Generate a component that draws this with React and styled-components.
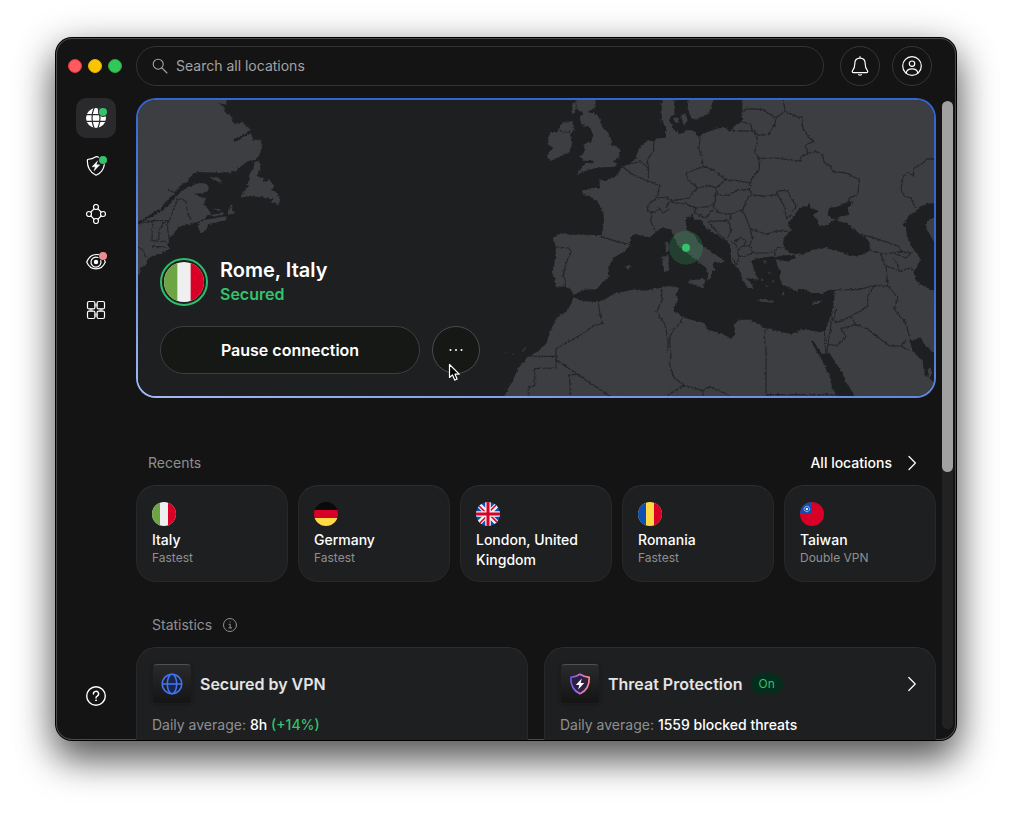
import React from "react";
import styled, { createGlobalStyle } from "styled-components";

const GlobalStyle = createGlobalStyle`
  * { box-sizing: border-box; }
  body { margin: 0; background: #fff; font-family: Inter, "Liberation Sans", sans-serif; color: #fff; }
  button, input { font: inherit; color: inherit; }
  button { padding: 0; cursor: pointer; }
  svg { display: block; }
  h1, h2, h3, p { margin: 0; }
`;

const Page = styled.div`
  display: flex;
  height: 100vh;
  padding: 38px 56px 74px;
  overflow: hidden;
`;

const Window = styled.div`
  flex: 1;
  min-width: 0;
  display: flex;
  flex-direction: column;
  overflow: hidden;
  border-radius: 16px;
  background: #141414;
  box-shadow: inset 0 0 0 1px #4b4b4b, 0 0 0 1px #000, 0 20px 36px rgba(0, 0, 0, 0.5), 0 10px 40px rgba(0, 0, 0, 0.36);
`;

const TopBar = styled.header`
  display: flex;
  align-items: center;
  padding: 8px 24px 12px 12px;
`;

const Lights = styled.div`
  display: flex;
  gap: 6px;
  width: 68px;
`;

const Light = styled.button`
  width: 14px;
  height: 14px;
  border: 1px solid ${(p) => p.$edge};
  border-radius: 50%;
  background: ${(p) => p.$color};
`;

const SearchBox = styled.label`
  flex: 1;
  display: flex;
  align-items: center;
  gap: 8px;
  height: 40px;
  margin-right: 16px;
  padding: 0 15px;
  border: 1px solid #333334;
  border-radius: 20px;
  color: #a3a3a3;
`;

const SearchInput = styled.input`
  flex: 1;
  min-width: 0;
  padding: 0;
  border: 0;
  outline: 0;
  background: none;
  font-size: 14px;
  line-height: 20px;
  &::placeholder { color: #a3a3a3; opacity: 1; }
`;

const RoundButton = styled.button`
  display: grid;
  place-items: center;
  width: 40px;
  height: 40px;
  border: 1px solid #363637;
  border-radius: 50%;
  background: none;
  & + & { margin-left: 12px; }
`;

const Body = styled.div`
  flex: 1;
  min-height: 0;
  display: flex;
`;

const Sidebar = styled.nav`
  display: flex;
  flex-direction: column;
  gap: 8px;
  width: 80px;
  padding: 0 20px 24px;
`;

const NavButton = styled.button`
  position: relative;
  display: grid;
  place-items: center;
  width: 40px;
  height: 40px;
  border: 0;
  border-radius: 10px;
  background: ${(p) => (p.$active ? "#2a2a2c" : "none")};
`;

const NavFoot = styled.div`
  margin-top: auto;
`;

const Dot = styled.span`
  position: absolute;
  top: 10px;
  right: 9px;
  width: 8px;
  height: 8px;
  border-radius: 50%;
  background: ${(p) => p.$color};
`;

const Main = styled.main`
  flex: 1;
  min-width: 0;
  overflow: hidden;
`;

const ScrollTrack = styled.div`
  width: 11px;
  margin: 3px 3px 11px 6px;
  border-radius: 6px;
  background: #222223;
`;

const ScrollThumb = styled.div`
  height: 59%;
  border-radius: 6px;
  background: #a1a1a1;
`;

const Hero = styled.section`
  position: relative;
  display: flex;
  flex-direction: column;
  justify-content: flex-end;
  gap: 20px;
  height: 300px;
  padding: 22px;
  overflow: hidden;
  border: 2px solid transparent;
  border-radius: 20px;
  background: linear-gradient(#1e1f21, #1e1f21) padding-box,
    linear-gradient(12deg, #a4bbf2 0%, #7f9fe6 18%, #3466d2 62%) border-box;
`;

const MapArt = styled.svg`
  position: absolute;
  inset: 0;
  width: 100%;
  height: 100%;
`;

const Place = styled.div`
  position: relative;
  display: flex;
  align-items: center;
  gap: 12px;
`;

const FlagRing = styled.div`
  padding: 2px;
  border: 2px solid #2ebd68;
  border-radius: 50%;
  background: #1e1f21;
`;

const PlaceName = styled.h1`
  font-size: 20px;
  line-height: 24px;
  font-weight: 600;
`;

const PlaceState = styled.p`
  font-size: 16px;
  line-height: 24px;
  font-weight: 600;
  color: #35c26d;
`;

const Actions = styled.div`
  position: relative;
  display: flex;
  gap: 12px;
`;

const PauseButton = styled.button`
  width: 260px;
  height: 48px;
  border: 1px solid #3d3e40;
  border-radius: 24px;
  background: #161816;
  font-size: 16px;
  font-weight: 600;
`;

const MoreButton = styled.button`
  position: relative;
  display: grid;
  place-items: center;
  width: 48px;
  height: 48px;
  border: 1px solid #4a4a4c;
  border-radius: 50%;
  background: #161816;
`;

const Cursor = styled.svg`
  position: absolute;
  left: 15px;
  top: 36px;
`;

const SectionHead = styled.div`
  display: flex;
  align-items: center;
  justify-content: space-between;
  height: 22px;
  margin-top: ${(p) => p.$space};
  margin-bottom: 11px;
  padding: 0 ${(p) => p.$inset} 0;
`;

const SectionTitle = styled.h2`
  display: flex;
  align-items: center;
  gap: 10px;
  font-size: 14px;
  line-height: 20px;
  font-weight: 400;
  color: #8f8f90;
`;

const AllLink = styled.a`
  display: flex;
  align-items: center;
  gap: 12px;
  font-size: 14px;
  line-height: 20px;
  font-weight: 500;
  color: #fff;
  text-decoration: none;
`;

const RecentGrid = styled.div`
  display: grid;
  grid-template-columns: repeat(5, minmax(0, 1fr));
  gap: 10px;
`;

const RecentCard = styled.button`
  display: flex;
  flex-direction: column;
  align-items: flex-start;
  min-height: 97px;
  padding: 16px 15px 8px;
  border: 1px solid #27282a;
  border-top-color: #2d2e30;
  border-radius: 20px;
  background: #1e1f21;
  text-align: left;
`;

const RecentName = styled.span`
  margin-top: 4px;
  font-size: 14px;
  line-height: 20px;
  font-weight: 500;
`;

const RecentNote = styled.span`
  font-size: 12px;
  line-height: 16px;
  color: #8f8f90;
`;

const StatGrid = styled.div`
  display: grid;
  grid-template-columns: repeat(2, minmax(0, 1fr));
  gap: 16px;
`;

const StatCard = styled.article`
  min-height: 200px;
  padding: 16px 15px;
  border: 1px solid #27282a;
  border-top-color: #2d2e30;
  border-radius: 20px;
  background: #1e1f21;
`;

const StatHead = styled.div`
  display: flex;
  align-items: center;
  gap: 8px;
`;

const StatIcon = styled.div`
  display: grid;
  place-items: center;
  width: 40px;
  height: 40px;
  border: 1px solid #1c1c1d;
  border-top-color: #505052;
  border-radius: 5px;
  background: linear-gradient(#2a2a2c, #141414);
  box-shadow: 0 1px 4px rgba(0, 0, 0, 0.25);
`;

const StatTitle = styled.h3`
  font-size: 16px;
  line-height: 24px;
  font-weight: 600;
  color: #e4e4e4;
`;

const Badge = styled.span`
  padding: 0 8px;
  border-radius: 10px;
  background: #032d1c;
  font-size: 12px;
  line-height: 20px;
  color: #35c26d;
`;

const StatLink = styled.a`
  margin-left: auto;
  padding-right: 4px;
  color: #fff;
`;

const StatText = styled.p`
  margin-top: 11px;
  font-size: 14px;
  line-height: 20px;
  color: #8f8f90;
  b { font-weight: 500; color: #fff; }
  i { font-style: normal; font-weight: 500; color: #35c26d; }
`;

const RED = "#d80027";

const flagArt = {
  italy: (
    <>
      <path fill="#efefef" d="M0 0h24v24H0z" />
      <path fill="#6da544" d="M0 0h8v24H0z" />
      <path fill={RED} d="M16 0h8v24h-8z" />
    </>
  ),
  germany: (
    <>
      <path fill="#0a0a0a" d="M0 0h24v8H0z" />
      <path fill={RED} d="M0 8h24v8H0z" />
      <path fill="#ffda44" d="M0 16h24v8H0z" />
    </>
  ),
  uk: (
    <>
      <path fill="#0052b4" d="M0 0h24v24H0z" />
      <path stroke="#efefef" strokeWidth="5" d="M0 0l24 24M24 0L0 24" />
      <path stroke={RED} strokeWidth="1.500" d="M0 0.900l11 11M24 23.100l-11-11M23.100 0l-11 11M0.900 24l11-11" />
      <path stroke="#efefef" strokeWidth="5.600" d="M12 0v24M0 12h24" />
      <path stroke={RED} strokeWidth="3" d="M12 0v24M0 12h24" />
    </>
  ),
  romania: (
    <>
      <path fill="#ffda44" d="M0 0h24v24H0z" />
      <path fill="#0d50b5" d="M0 0h8v24H0z" />
      <path fill={RED} d="M16 0h8v24h-8z" />
    </>
  ),
  taiwan: (
    <>
      <path fill={RED} d="M0 0h24v24H0z" />
      <path fill="#0d50b5" d="M0 0h12v12H0z" />
      <circle cx="6.900" cy="7" r="2.700" fill="none" stroke="#d5def2" strokeWidth="0.900" strokeDasharray="1.200 0.300" />
      <circle cx="6.900" cy="7" r="1.200" fill="#efefef" />
    </>
  ),
};

function Flag({ kind, size = 24 }) {
  const id = `flag-${kind}-${size}`;
  return (
    <svg width={size} height={size} viewBox="0 0 24 24" aria-hidden="true">
      <clipPath id={id}>
        <circle cx="12" cy="12" r="12" />
      </clipPath>
      <g clipPath={`url(#${id})`}>{flagArt[kind]}</g>
    </svg>
  );
}

function Icon({ size = 20, width = 1.2, children }) {
  return (
    <svg width={size} height={size} viewBox={`0 0 ${size} ${size}`} fill="none" stroke="currentColor"
      strokeWidth={width} strokeLinecap="round" strokeLinejoin="round" aria-hidden="true">
      {children}
    </svg>
  );
}

const Chevron = () => (
  <svg width="8" height="16" viewBox="0 0 8 16" fill="none" stroke="currentColor" strokeWidth="1.200"
    strokeLinecap="round" strokeLinejoin="round" aria-hidden="true">
    <path d="M0.800 1.500L7.200 8L0.800 14.500" />
  </svg>
);

const GlobeIcon = () => (
  <Icon>
    <circle cx="10" cy="10" r="10" fill="#fff" stroke="none" />
    <g stroke="#2a2a2c" strokeWidth="1.200">
      <path d="M0 6.600h20M0 13.400h20M8 0C5.600 6 5.600 14 8 20M12 0c2.400 6 2.400 14 0 20" />
    </g>
    <circle cx="17" cy="4" r="5" fill="#2a2a2c" stroke="none" />
  </Icon>
);

const ShieldIcon = () => (
  <Icon>
    <path d="M12.500 1.200C11.600 0.700 10.800 0.600 10 0.700C7.400 2.300 4.400 3.200 1.500 3.500C0.800 10.500 4 16.700 10 19.300C14.800 17.200 17.700 13.200 18.300 8.600" />
    <path d="M11.500 5L6 10.800h3.300L8 15l5.800-6.200h-3.400z" fill="#fff" stroke="#fff" strokeWidth="0.400" />
  </Icon>
);

const MeshIcon = () => (
  <Icon>
    <circle cx="10" cy="3" r="2.500" />
    <circle cx="10" cy="17" r="2.500" />
    <circle cx="3" cy="10" r="2.500" />
    <circle cx="17" cy="10" r="2.500" />
    <path d="M8 4.900L4.900 8M12 4.900L15.100 8M4.900 12L8 15.100M15.100 12L12 15.100" />
  </Icon>
);

const EyeIcon = () => (
  <Icon>
    <path d="M12.400 2.700C7 1.700 3 4.800 0.700 10C4.500 19.200 15.500 19.200 19.300 10C19.100 9.400 18.900 9 18.600 8.500" />
    <path d="M12 5.500A5 5 0 1 0 14.800 8.700" />
    <circle cx="10" cy="10" r="1.600" fill="#fff" />
  </Icon>
);

const GridIcon = () => (
  <Icon>
    <path d="M8.500 5h3M8.500 15h3M5 8.500v3M15 8.500v3" stroke="#8a8a8a" strokeWidth="3" strokeLinecap="butt" />
    <rect x="1.500" y="1.500" width="7.400" height="7.400" rx="1.500" />
    <rect x="11.100" y="1.500" width="7.400" height="7.400" rx="1.500" />
    <rect x="1.500" y="11.100" width="7.400" height="7.400" rx="1.500" />
    <rect x="11.100" y="11.100" width="7.400" height="7.400" rx="1.500" />
  </Icon>
);

const HelpIcon = () => (
  <Icon width={1.400}>
    <circle cx="10" cy="10" r="9.300" />
    <path d="M7.400 8A2.600 2.600 0 1 1 11.200 10.200Q10 10.800 10 12" />
    <circle cx="10" cy="14.300" r="0.500" fill="currentColor" strokeWidth="0.800" />
  </Icon>
);

const BellIcon = () => (
  <Icon>
    <path d="M10 0.700V2.200M10 2.200C6.700 2.200 4.800 4.600 4.800 7.800C4.800 11.600 4.200 12.900 2.700 14.400C1.900 15.500 2.300 16.600 3.600 16.600H16.400C17.700 16.600 18.100 15.500 17.300 14.400C15.800 12.900 15.200 11.600 15.200 7.800C15.200 4.600 13.300 2.200 10 2.200Z" />
    <path d="M8.600 18.600Q10 19.800 11.400 18.600" />
  </Icon>
);

const UserIcon = () => (
  <Icon>
    <circle cx="10" cy="10" r="9.300" />
    <circle cx="10" cy="7.700" r="2.700" />
    <path d="M4.200 17.200C4.500 14 6.600 12.900 10 12.900S15.500 14 15.800 17.200" />
  </Icon>
);

const WorldMap = () => (
  <MapArt viewBox="6 6 2388 888" preserveAspectRatio="xMaxYMid slice" aria-hidden="true">
    <defs>
      <filter id="coast" x="0" y="0" width="100%" height="100%" colorInterpolationFilters="sRGB">
        <feTurbulence type="fractalNoise" baseFrequency="0.130" numOctaves="2" seed="4" />
        <feDisplacementMap in="SourceGraphic" scale="10" xChannelSelector="R" yChannelSelector="G" />
      </filter>
    </defs>
    <g filter="url(#coast)">
      <path fill="#1e1f21" d="M-20-20H2420V920H-20Z" />
      {/* North America */}
      <g fill="#3d3e42">
        <path d="M-20-20H270L272 20L250 16L262 28L270 45L285 55L290 75L305 78L318 70L330 85L345 92L330 105L310 115L292 125L294 132L315 122L345 105L352 125L375 125L378 150L370 170L360 185L335 190L315 205L295 222L250 224L185 222L165 232L155 250L130 265L118 285L100 300L75 330L50 345L20 365L-20 380Z" />
        <path d="M-20 386L5 380L35 362L55 352L100 322L125 290L150 270L180 257L205 255L218 265L215 280L200 285L175 287L195 297L208 300L205 320L218 335L225 350L245 348L260 342L265 350L235 355L215 350L205 365L190 370L160 380L130 385L115 405L100 420L95 440L100 455L85 462L60 470L35 480L30 500L15 505L5 540L-20 545Z" />
        <path d="M185 385L190 375L210 365L250 358L272 355L270 367L245 372L220 378L210 395L198 404L188 398Z" />
        <path d="M275 340L285 320L290 320L288 338L298 345L280 352Z" />
        <path d="M220 237L245 238L262 252L250 254L235 247Z" />
        <path d="M230 330L255 335L250 340Z" />
        <path d="M360 190L375 192L372 215L362 235L380 240L385 252L400 245L408 255L415 265L405 275L418 282L425 290L432 305L428 322L415 312L405 318L410 300L395 300L380 298L350 295L315 298L325 280L340 262L330 260L342 245L340 230L352 210Z" />
      </g>
      <g fill="none" stroke="#242528" strokeWidth="3.500">
        <path d="M0 378L50 368H100L110 340L125 305L135 302L150 310L155 345L165 365M50 368L48 428L90 430M95 368V395L100 425M85 372L70 395L68 428M48 445L90 447M0 445L20 455L30 480M95 275L118 285" />
      </g>
      {/* Western Europe and north-west Africa */}
      <g transform="translate(792)">
        <g fill="#3d3e42">
          <path d="M528-10H590L585 30L562 42L590 48L600 65L608 90L625 105L636 130L628 140L650 145L662 158L655 180L640 190L652 197L640 207L600 208L575 212L560 215L548 222L530 230L545 208L560 195L580 196L580 188L560 188L535 178L550 168L555 150L548 138L572 132L580 112L575 100L565 85L545 82L540 60L550 45L530 35Z" />
          <path d="M490 72L515 70L522 95L510 108L516 135L512 160L490 170L470 182L450 188L440 175L450 162L460 150L445 140L445 120L450 104L472 105L475 92Z" />
          <path d="M518 15L528 10L525 40L516 50Z" />
          <path d="M785 15L800-10H812V120H798V85L785 70Z" />
          <path d="M812 115L790 120L765 122L765 130L745 128L725 140L712 165L705 185L680 200L665 205L655 230L635 240L615 250L598 243L600 270L575 270L545 278L550 290L580 300L595 315L610 345L612 370L605 412L560 410L510 410L485 405L458 420L468 445L465 490L455 525L465 540L465 565L490 566L510 570L520 590L535 585L550 575L590 573L610 550L628 535L625 510L640 480L680 455L690 440L690 420L705 408L730 415L750 418L775 395L790 388L812 395Z" />
          <path d="M675 505L688 500L692 508L683 515Z" />
          <path d="M793 435L808 430L808 460L800 465Z" />
          <path d="M786 478L808 470L810 520L792 522Z" />
          <path d="M520 597L535 605L555 610L595 612L620 600L650 585L700 575L735 578L780 570L812 562V920H300L335 855L355 810L385 775L415 760L440 735L450 700L470 660L500 640L515 615Z" />
          <path d="M315 762l8 2l-3 4zM335 768l8-2l-2 6zM365 760l8-10l2 2l-5 10z" />
        </g>
        <g fill="none" stroke="#242528" strokeWidth="3.500" strokeLinejoin="round">
          <path d="M603 415L640 428L690 440M468 447L505 450L514 460L500 490L490 530L497 550L490 566" />
          <path d="M665 205L700 230L740 248L780 262L770 300L745 320L742 335L755 345L752 370L765 395M680 200L720 190L745 210L745 245M745 210L742 185L760 160L762 130M770 300L805 297M755 345L780 332L790 345L812 330" />
          <path d="M595 612L600 650L608 678L580 682L560 700L500 735L468 752V810L404 812V862L385 870V900M385 775H468M468 785L630 895M540 830H508L512 900M785 572V610L770 640L795 680L805 730L802 760" />
          <path d="M475 92L490 105L510 100" />
        </g>
      </g>
      {/* Eastern Europe, the Mediterranean and the Middle East */}
      <g transform="translate(1590)">
        <path fill="#3d3e42" d="M10-20H840V920H10Z" />
        <g fill="#1e1f21">
          <path d="M25-20H70L65 30L75 60L90 65L130 45L140 10L150-20H230L228 70L210 82L190 98L180 88L150 92L105 110L98 118L85 100L70 95L40 108L20 90L10 65L15 55L25 50L25 20Z" />
          <path d="M8 388L20 390L60 385V360L80 350L85 365L105 365L120 390L160 415L185 430L195 455V490L220 515L230 545L245 570L262 573L258 560L240 540L275 545L265 520L260 500L255 488L285 480L320 475L330 485L335 505L345 520L340 540L350 560L375 570L390 580L410 572L440 585L470 585L490 575H505V610L495 650L480 695L465 702L410 695L375 708L340 700L300 690L250 665H215L205 685L208 710L195 720L160 705L125 695L115 675L75 665L50 658L20 635L38 605L28 590L40 570L20 565H8Z" />
          <path d="M325 480L345 472H385L390 480L365 488L335 487Z" />
          <path d="M350 445L355 420L375 395L365 375L385 355L400 330L425 325L430 312L432 328L460 340L440 350L455 365L460 385L485 380L505 365L540 375L580 405L610 430L612 455L590 470L555 475L515 460L480 450L440 455L410 470L370 465Z" />
          <path d="M485 345L490 330L520 325L535 315L565 310L545 330L550 350L530 355L510 365L487 355Z" />
          <path d="M710 380L730 350L750 340L770 322L795 315L840 320V360H800L780 375L782 395L805 430L830 450V578H805L795 575L765 560L748 545L745 520L758 495L765 485L740 450L722 415L720 390Z" />
          <path d="M435 728H442L468 768L490 765L530 825L535 845L565 890V920H535L497 870L495 845L470 790L455 765Z" />
          <path d="M730 722L740 728L765 718L775 740L830 785V870L800 850L790 840L775 830L770 790L740 760Z" />
        </g>
        <g fill="#3d3e42">
          <path d="M45 50L60 45L65 70L52 80ZM22 58l14 2l2 14l-12-2z" />
          <path d="M-4 365H60V395L85 410L95 430L115 448L150 470L175 490L165 497L145 490L140 500L148 515L135 520V540L122 548L128 530L118 508L95 490L75 475L50 455L35 440L22 415L15 395L-4 390Z" />
          <path d="M65 548L110 542L118 545L112 572L90 562L68 556Z" />
          <path d="M272 605L325 608L320 614L280 610ZM438 615L470 607L455 618L442 621Z" />
          <path d="M290 488l12 2l-4 8zM305 520l10 4l-6 6zM285 540l8 6l-6 4zM318 545l10 2l-8 5zM345 590l10-8l-2 12zM300 560l8 3l-7 4zM255 520l25 22l-5 4l-22-18z" />
          <path d="M785 815L795 808V835L788 838Z" />
        </g>
        <g fill="none" stroke="#242528" strokeWidth="3.500" strokeLinejoin="round">
          <path d="M228 40L245 32L290 35L310 48L330 60L325 85L315 95L310 110L275 112L258 98L255 80L230 72M350-5L357 40L330 60M357 40L390 55L408 58L410 88L425 115L443 130L420 140L425 168L405 175L403 190L365 185L330 180L275 182" />
          <path d="M190 97L268 100L275 112M268 100L275 130L265 160L280 185V215L255 245L250 255L215 248L180 245L140 215L112 205L105 170L98 150L103 120" />
          <path d="M425 168L450 160L470 170L475 195L495 205L500 220L540 225L580 245L575 290L550 300L548 310" />
          <path d="M112 205L60 225L65 245L95 270L130 262L150 270L180 245M150 270L155 290L190 292L215 275H250L255 250M0 300L20 308L70 300L78 285L95 270M150 270L148 310L130 325L90 330L60 318L10 312L0 330" />
          <path d="M148 310L140 325L160 345L195 348L230 335L245 300L258 290L250 275M258 290L300 295L330 290L335 280M330 282L355 325L362 362L378 350M335 278H365L375 300L392 325L378 340M230 335L250 385L258 395L300 408L340 398L365 400" />
          <path d="M195 348L190 370L195 400L185 420M250 385L260 420L250 445L262 465M90 330L85 345L118 360L140 335M125 370L185 368L192 380M125 370L160 410L185 430M195 430L210 440L215 465L220 480L210 500L200 480M215 460L225 445L250 443L262 465L235 475L218 472M205 432L225 418L240 430L232 445M262 465H300L325 462L335 450L350 448M325 462L330 475" />
          <path d="M585 410L620 418L655 430L700 445L705 460L735 465M612 455L645 468L680 465L705 460M645 468L655 500L700 520L695 500L680 480M700 520L735 510L745 520M680 465L720 480L740 460M660 505L665 560L695 600L685 635L720 675L730 715" />
          <path d="M505 578L520 575H580L625 562L665 565M625 562L605 595V625L555 655L518 673L503 668L510 628M555 655L570 680L525 692L540 715L515 742L485 740M570 680L600 690L670 743L705 745L730 758M705 745L720 725M500 640L492 700L482 765M475 700L480 765" />
          <path d="M298 692L295 720L300 750V890H520M48 655L45 675L22 695L10 720L15 770L12 805L25 840L55 862L5 892M55 862L110 878L130 865L190 892M110 878L112 895" />
          <path d="M812 185L785 182L745 212L742 235L725 222L710 240L705 275L715 295L735 300L748 330" />
        </g>
      </g>
    </g>
    <circle cx="1650" cy="449" r="51" fill="#35c26d" fillOpacity="0.200" />
    <circle cx="1650" cy="449" r="12" fill="#35c26d" />
  </MapArt>
);

const navItems = [
  { label: "VPN", icon: <GlobeIcon />, dot: "#35c26d", active: true },
  { label: "Threat Protection", icon: <ShieldIcon />, dot: "#35c26d" },
  { label: "Meshnet", icon: <MeshIcon /> },
  { label: "Dark Web Monitor", icon: <EyeIcon />, dot: "#ee8a92" },
  { label: "More products", icon: <GridIcon /> },
];

const recents = [
  { flag: "italy", name: "Italy", note: "Fastest" },
  { flag: "germany", name: "Germany", note: "Fastest" },
  { flag: "uk", name: "London, United Kingdom" },
  { flag: "romania", name: "Romania", note: "Fastest" },
  { flag: "taiwan", name: "Taiwan", note: "Double VPN" },
];

export default function App() {
  return (
    <Page>
      <GlobalStyle />
      <Window>
        <TopBar>
          <Lights>
            <Light $color="#ff5a5f" $edge="#e0383e" aria-label="Close" />
            <Light $color="#fbc400" $edge="#e5b000" aria-label="Minimize" />
            <Light $color="#33c759" $edge="#1fae3c" aria-label="Zoom" />
          </Lights>
          <SearchBox>
            <Icon size={16} width={1.100}>
              <circle cx="6.200" cy="6.200" r="5" />
              <path d="M10 10L15 15" />
            </Icon>
            <SearchInput type="text" placeholder="Search all locations" aria-label="Search all locations" />
          </SearchBox>
          <RoundButton aria-label="Notifications"><BellIcon /></RoundButton>
          <RoundButton aria-label="Account"><UserIcon /></RoundButton>
        </TopBar>
        <Body>
          <Sidebar>
            {navItems.map((n) => (
              <NavButton key={n.label} aria-label={n.label} $active={n.active}>
                {n.icon}
                {n.dot && <Dot $color={n.dot} />}
              </NavButton>
            ))}
            <NavFoot>
              <NavButton aria-label="Help"><HelpIcon /></NavButton>
            </NavFoot>
          </Sidebar>
          <Main>
            <Hero>
              <WorldMap />
              <Place>
                <FlagRing><Flag kind="italy" size={40} /></FlagRing>
                <div>
                  <PlaceName>Rome, Italy</PlaceName>
                  <PlaceState>Secured</PlaceState>
                </div>
              </Place>
              <Actions>
                <PauseButton>Pause connection</PauseButton>
                <MoreButton aria-label="More options">
                  <svg width="16" height="4" viewBox="0 0 16 4" fill="#fff" aria-hidden="true">
                    <circle cx="2.500" cy="2" r="1" />
                    <circle cx="8" cy="2" r="1" />
                    <circle cx="13.500" cy="2" r="1" />
                  </svg>
                  <Cursor width="13" height="19" viewBox="0 0 13 19" aria-hidden="true">
                    <path d="M1.500 1.500V14.500L4.500 11.900L6.700 17.100L9.100 16L7 11.200H11.200Z" fill="#000" stroke="#fff" strokeWidth="1.200" strokeLinejoin="round" />
                  </Cursor>
                </MoreButton>
              </Actions>
            </Hero>

            <SectionHead $space="54px" $inset="12px">
              <SectionTitle>Recents</SectionTitle>
              <AllLink href="#locations">
                All locations
                <Icon><path d="M5 3.500L11.400 10L5 16.500" /></Icon>
              </AllLink>
            </SectionHead>
            <RecentGrid>
              {recents.map((r) => (
                <RecentCard key={r.name}>
                  <Flag kind={r.flag} />
                  <RecentName>{r.name}</RecentName>
                  {r.note && <RecentNote>{r.note}</RecentNote>}
                </RecentCard>
              ))}
            </RecentGrid>

            <SectionHead $space="32px" $inset="16px">
              <SectionTitle>
                Statistics
                <Icon size={16} width={1}>
                  <circle cx="8" cy="8" r="6.500" />
                  <path d="M7 7.300h1.200v3.500M6.800 10.900h2.800M8 5h0.200" />
                </Icon>
              </SectionTitle>
            </SectionHead>
            <StatGrid>
              <StatCard>
                <StatHead>
                  <StatIcon>
                    <svg width="22" height="22" viewBox="0 0 22 22" fill="none" stroke="#4372ee" strokeWidth="1.600" aria-hidden="true">
                      <circle cx="11" cy="11" r="9.800" />
                      <ellipse cx="11" cy="11" rx="4.700" ry="9.800" fill="#16264e" />
                      <path d="M1.200 11h19.600" />
                    </svg>
                  </StatIcon>
                  <StatTitle>Secured by VPN</StatTitle>
                </StatHead>
                <StatText>Daily average: <b>8h</b> <i>(+14%)</i></StatText>
              </StatCard>
              <StatCard>
                <StatHead>
                  <StatIcon>
                    <svg width="22" height="22" viewBox="0 0 22 22" aria-hidden="true">
                      <linearGradient id="shield" x1="0" y1="0.500" x2="1" y2="0.500">
                        <stop offset="0" stopColor="#6658ee" />
                        <stop offset="0.550" stopColor="#cf74c8" />
                        <stop offset="1" stopColor="#ff8a84" />
                      </linearGradient>
                      <path d="M11 1.200C13.800 2.900 17 3.900 20.200 4.300C20.500 11.500 17.300 18 11 20.800C4.700 18 1.500 11.500 1.800 4.300C5 3.900 8.200 2.900 11 1.200Z" fill="#2c1f42" stroke="url(#shield)" strokeWidth="1.700" strokeLinejoin="round" />
                      <path d="M12.800 5.500L6.800 12h3.500L9.200 16.600L15.200 10h-3.600z" fill="#fff" />
                    </svg>
                  </StatIcon>
                  <StatTitle>Threat Protection</StatTitle>
                  <Badge>On</Badge>
                  <StatLink href="#threats" aria-label="Threat Protection details"><Chevron /></StatLink>
                </StatHead>
                <StatText>Daily average: <b>1559 blocked threats</b></StatText>
              </StatCard>
            </StatGrid>
          </Main>
          <ScrollTrack aria-hidden="true"><ScrollThumb /></ScrollTrack>
        </Body>
      </Window>
    </Page>
  );
}
